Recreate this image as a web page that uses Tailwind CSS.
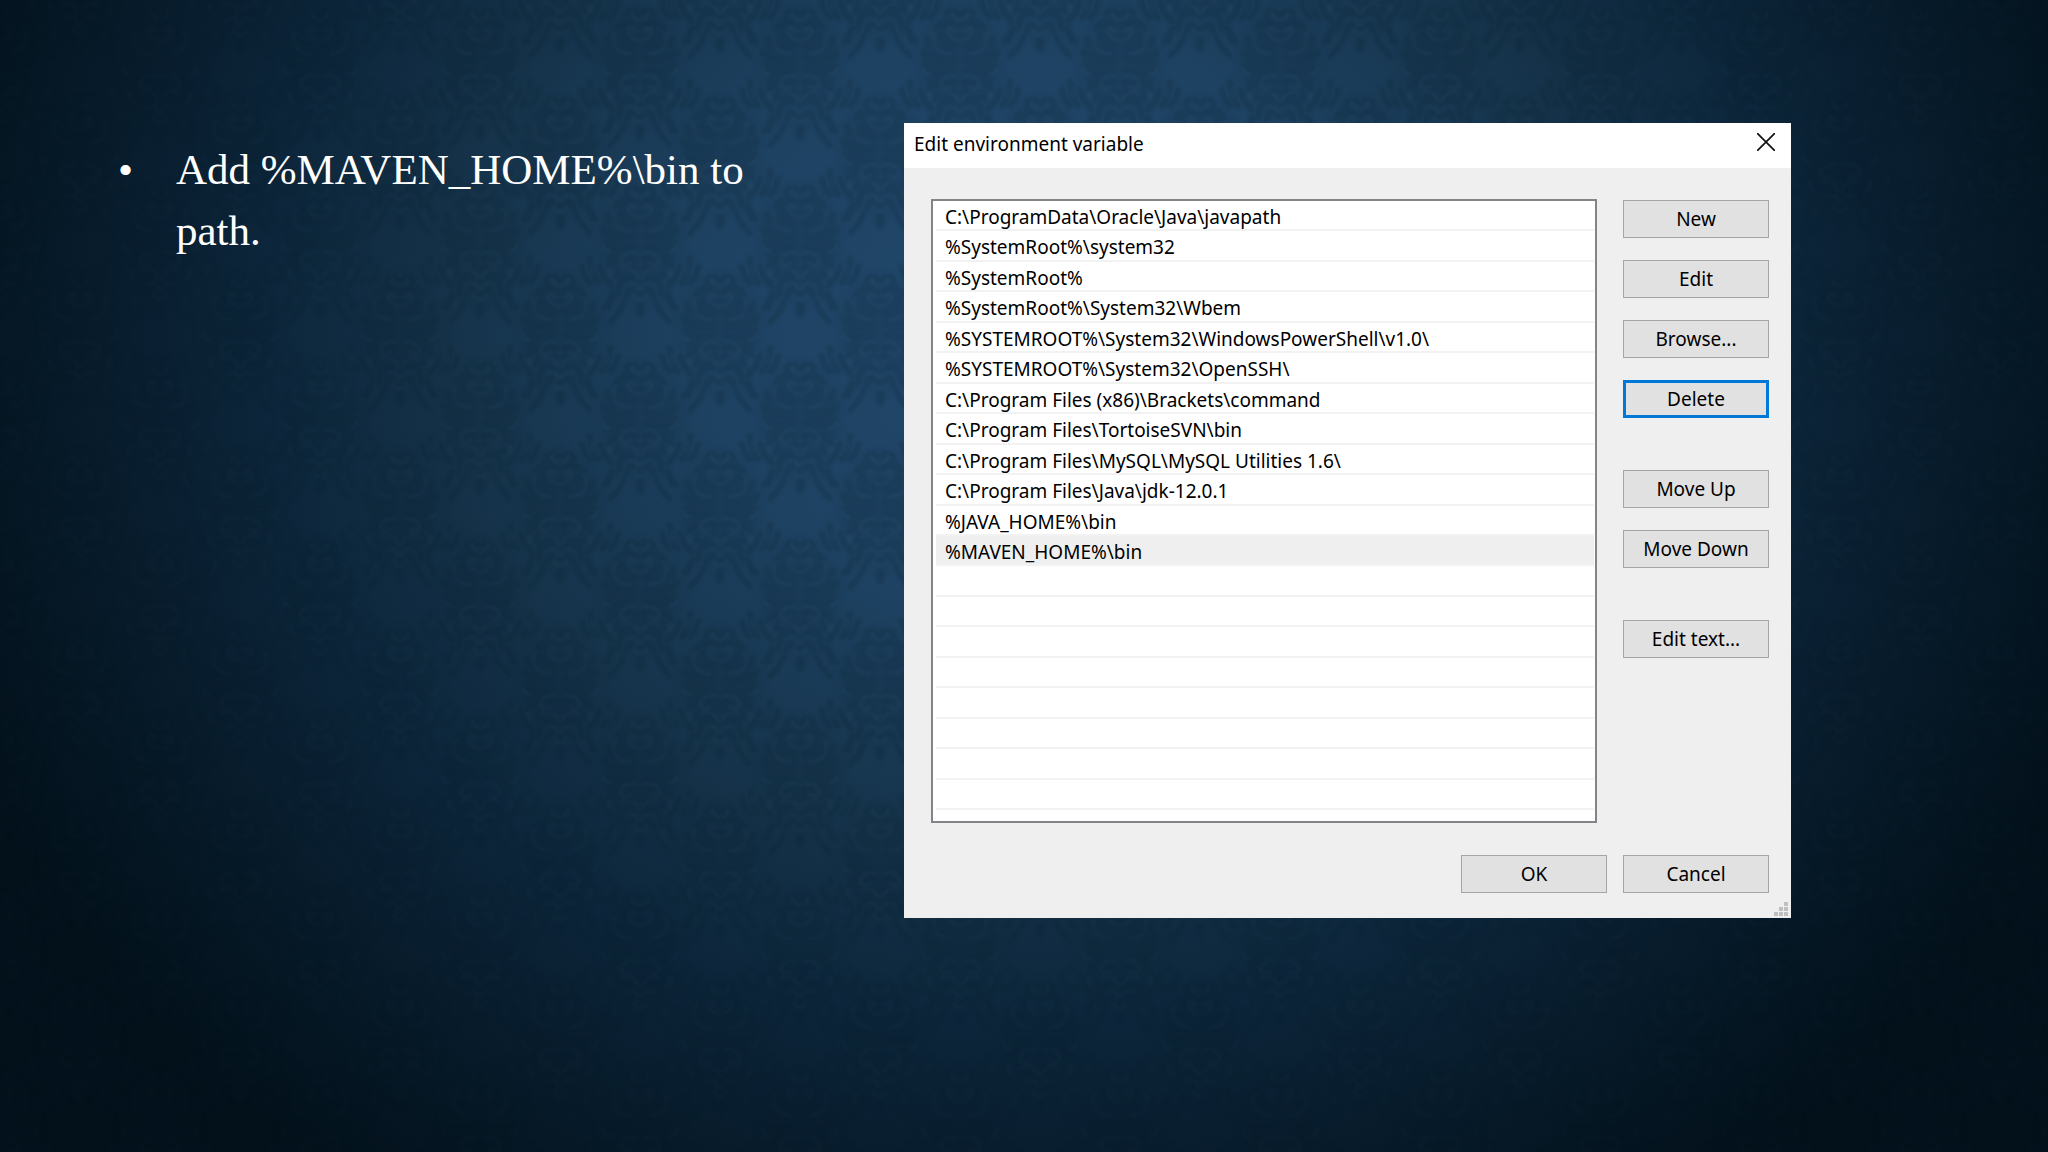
<!DOCTYPE html>
<html lang="en">
<head>
  <meta charset="UTF-8" />
  <meta name="viewport" content="width=device-width, initial-scale=1.0" />
  <title>Maven setup - Path variable</title>
  <script src="https://cdn.jsdelivr.net/npm/@tailwindcss/browser@4"></script>
</head>
<body class="min-h-screen bg-[#020d17] relative isolate overflow-x-hidden">

  <!-- Damask backdrop -->
  <div class="absolute inset-0 -z-10 bg-[radial-gradient(ellipse_56%_92%_at_50%_28%,#21486c_0%,#1e4262_28%,#16344c_48%,#0d263b_66%,#071a29_84%,#03111b_100%)]" aria-hidden="true">
    <svg class="w-full h-full [mask-image:radial-gradient(ellipse_56%_90%_at_50%_30%,#000_40%,#0005_100%)]" xmlns="http://www.w3.org/2000/svg">
      <defs>
        <filter id="soft" x="-20%" y="-20%" width="140%" height="140%">
          <feGaussianBlur stdDeviation="1.6"/>
        </filter>
        <filter id="haze" x="-30%" y="-30%" width="160%" height="160%">
          <feGaussianBlur stdDeviation="5"/>
        </filter>
        <g id="half" fill="none" stroke="#04131f" stroke-linecap="round">
          <path d="M0-62c10 6 22 8 26 20 10 8 18 22 12 34 4 14-4 28-12 34-4 14-16 22-26 36z" fill="#04131f" stroke="none" opacity=".7" filter="url(#haze)"/>
          <g stroke-width="5">
            <path d="M2-56c4-6 12-4 12 2M4-44c8-6 16-4 20 2M2-34c8 6 18 2 22-6M4-24c10 4 24 2 30-8M6-12c10 4 24 2 32-6"/>
            <path d="M6 0c12 4 22 2 30-4M4 12c10-4 24-2 28 8M4 22c10-2 18 2 24 10M3 34c8-6 16-2 18 4M2 46c6-4 12-2 12 4M0 56c3 4 3 8 0 12"/>
          </g>
          <g stroke-width="6">
            <path d="M60-48c-2 8-6 14-12 20M52-42c-2 6-4 10-8 14M64-34c-4 10-8 14-14 20"/>
            <path d="M40 20c-2 8-6 14-12 20M50 12c0 10-4 18-8 24M58 20c-1 8-4 12-8 16"/>
          </g>
          <g stroke="#5c8fb8" stroke-opacity=".4" stroke-width="1.5">
            <path d="M2-50c4-2 6-4 6-8M2-30c8-2 12-8 8-12-4-2-6 2-4 4M10-16c10-2 16-6 16-12M26-30c2-4 0-8-4-8M4 6c8-2 14 2 16 8-2 6-8 6-10 2"/>
            <path d="M2 32c2-10 10-12 18-8M2 44c0-8 6-10 12-6M30 4c6 0 8-4 6-8M26 32c4-2 6-6 4-10M52-30c3-3 4-6 4-10M46 28c2-3 3-6 3-10M0 54c4-2 6-4 6-8"/>
          </g>
        </g>
        <g id="motif" filter="url(#soft)">
          <use href="#half"/>
          <use href="#half" transform="scale(-1 1)"/>
        </g>
        <pattern id="damask" width="160" height="177" patternUnits="userSpaceOnUse">
          <use href="#motif" x="0" y="70"/>
          <use href="#motif" x="160" y="70"/>
          <use href="#motif" x="80" y="-18"/>
          <use href="#motif" x="80" y="159"/>
        </pattern>
      </defs>
      <rect width="100%" height="100%" fill="url(#damask)" opacity=".17"/>
    </svg>
  </div>

  <main class="flex items-start pt-[123px] pl-[118px] pr-[257px] justify-between">

    <ul class="pt-4 w-[640px] text-white font-['Liberation_Serif',serif] text-[43px] leading-[61px]">
      <li class="flex">
        <span class="w-[58px] shrink-0" aria-hidden="true">•</span>
        <span>Add %MAVEN_HOME%\bin to<br>path.</span>
      </li>
    </ul>

    <!-- Dialog -->
    <section class="w-[887px] shrink-0 bg-[#efefef] text-black font-['Noto_Sans',sans-serif] text-[19px] leading-6 relative pb-[25px]" aria-labelledby="dialog-title">
      <header class="h-[45px] bg-white flex items-start justify-between pl-[10px] pr-4 pt-[9px]">
        <h1 id="dialog-title">Edit environment variable</h1>
        <button type="button" aria-label="Close" class="pt-px">
          <svg class="size-[18px]" viewBox="0 0 18 18" fill="none" stroke="#111" stroke-width="1.7"><path d="M0 0l18 18M18 0L0 18"/></svg>
        </button>
      </header>

      <div class="flex pt-[31px] pl-[27px] pr-[22px] gap-[26px]">
        <div class="grow h-[624px] bg-white border-2 border-[#828487] pl-[3px] pr-px">
          <ul class="h-[609px] grid grid-rows-[repeat(20,minmax(0,1fr))] *:border-b-2 *:border-[#f2f2f2] *:pl-[9px] *:pt-1">
            <li>C:\ProgramData\Oracle\Java\javapath</li>
            <li>%SystemRoot%\system32</li>
            <li>%SystemRoot%</li>
            <li>%SystemRoot%\System32\Wbem</li>
            <li>%SYSTEMROOT%\System32\WindowsPowerShell\v1.0\</li>
            <li>%SYSTEMROOT%\System32\OpenSSH\</li>
            <li>C:\Program Files (x86)\Brackets\command</li>
            <li>C:\Program Files\TortoiseSVN\bin</li>
            <li>C:\Program Files\MySQL\MySQL Utilities 1.6\</li>
            <li>C:\Program Files\Java\jdk-12.0.1</li>
            <li>%JAVA_HOME%\bin</li>
            <li class="bg-[#efefef]">%MAVEN_HOME%\bin</li>
            <li></li>
            <li></li>
            <li></li>
            <li></li>
            <li></li>
            <li></li>
            <li></li>
            <li></li>
          </ul>
        </div>

        <div class="w-[146px] shrink-0 pt-px flex flex-col gap-[22px] *:h-[38px] *:bg-[#e1e1e1] *:border *:border-[#a5a5a5]">
          <button type="button">New</button>
          <button type="button">Edit</button>
          <button type="button">Browse...</button>
          <button type="button" class="border-3! border-[#0078d7]!">Delete</button>
          <button type="button" class="mt-[30px]">Move Up</button>
          <button type="button">Move Down</button>
          <button type="button" class="mt-[30px]">Edit text...</button>
        </div>
      </div>

      <footer class="flex justify-end gap-4 pt-8 pr-[22px] *:w-[146px] *:h-[38px] *:bg-[#e1e1e1] *:border *:border-[#a5a5a5]">
        <button type="button">OK</button>
        <button type="button">Cancel</button>
      </footer>

      <svg class="absolute right-[3px] bottom-[2px] size-[14px]" viewBox="0 0 14 14" fill="#bfbfbf" aria-hidden="true">
        <path d="M10 0h4v4h-4zM5 5h4v4H5zM10 5h4v4h-4zM0 10h4v4H0zM5 10h4v4H5zM10 10h4v4h-4z"/>
      </svg>
    </section>
  </main>

</body>
</html>
